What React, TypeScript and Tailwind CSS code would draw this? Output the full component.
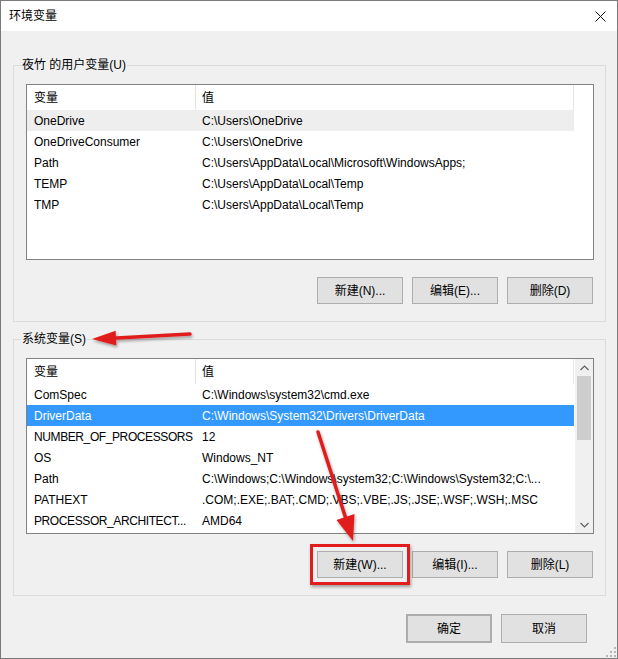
import React from "react";

type Row = { name: string; value: string; tight?: boolean };

const userVars: Row[] = [
  { name: "OneDrive", value: "C:\\Users\\OneDrive" },
  { name: "OneDriveConsumer", value: "C:\\Users\\OneDrive" },
  { name: "Path", value: "C:\\Users\\AppData\\Local\\Microsoft\\WindowsApps;" },
  { name: "TEMP", value: "C:\\Users\\AppData\\Local\\Temp" },
  { name: "TMP", value: "C:\\Users\\AppData\\Local\\Temp" },
];

const systemVars: Row[] = [
  { name: "ComSpec", value: "C:\\Windows\\system32\\cmd.exe" },
  { name: "DriverData", value: "C:\\Windows\\System32\\Drivers\\DriverData" },
  { name: "NUMBER_OF_PROCESSORS", value: "12", tight: true },
  { name: "OS", value: "Windows_NT" },
  { name: "Path", value: "C:\\Windows;C:\\Windows\\system32;C:\\Windows\\System32;C:\\..." },
  { name: "PATHEXT", value: ".COM;.EXE;.BAT;.CMD;.VBS;.VBE;.JS;.JSE;.WSF;.WSH;.MSC" },
  { name: "PROCESSOR_ARCHITECT...", value: "AMD64", tight: true },
];

const Btn = ({ label, className = "" }: { label: string; className?: string }) => (
  <button
    className={`w-[86px] h-[27px] bg-[#e1e1e1] border border-[#adadad] text-[12px] leading-none text-black ${className}`}
  >
    {label}
  </button>
);

const Scrollbar = () => (
  <div className="w-[18px] bg-[#f0f0f0] flex flex-col">
    <div className="h-[17px] flex items-center justify-center">
      <svg width="9" height="6" viewBox="0 0 9 6">
        <path d="M0.5 5 L4.5 1 L8.5 5" fill="none" stroke="#606060" strokeWidth="1.2" />
      </svg>
    </div>
    <div className="h-[64px] mx-[2px] bg-[#cdcdcd]" />
    <div className="flex-1" />
    <div className="h-[17px] flex items-center justify-center">
      <svg width="9" height="6" viewBox="0 0 9 6">
        <path d="M0.5 1 L4.5 5 L8.5 1" fill="none" stroke="#606060" strokeWidth="1.2" />
      </svg>
    </div>
  </div>
);

const VarList = ({
  rows,
  selected,
  focused,
  scroll,
}: {
  rows: Row[];
  selected: number;
  focused?: boolean;
  scroll?: boolean;
}) => (
  <div className="h-[176px] border border-[#828282] bg-white flex">
    <div className="w-[547px] flex flex-col">
      <div className="h-[25px] flex items-center">
        <div className="w-[169px] h-full pl-[7px] border-r border-[#e5e5e5] flex items-center">变量</div>
        <div className="w-[378px] h-full pl-[6px] border-r border-[#e5e5e5] flex items-center">值</div>
      </div>
      {rows.map((r, i) => {
        const sel = i === selected;
        const bg = sel ? (focused ? "bg-[#3399ff] text-white" : "bg-[#eeeeee]") : "";
        return (
          <div key={i} className={`h-[21px] flex items-center whitespace-nowrap ${bg}`}>
            <div className={`w-[169px] pl-[7px] overflow-hidden ${r.tight ? "tracking-[-0.4px]" : ""}`}>
              {r.name}
            </div>
            <div className="flex-1 pl-[6px] overflow-hidden">{r.value}</div>
          </div>
        );
      })}
    </div>
    <div className="flex-1" />
    {scroll && <Scrollbar />}
  </div>
);

const Group = ({
  title,
  children,
}: {
  title: string;
  children: React.ReactNode;
}) => (
  <fieldset className="border border-[#dcdcdc] p-0 m-0">
    <legend className="ml-[7px] px-[1px] leading-[17px]">{title}</legend>
    <div className="pl-[12px] pr-[11px] pt-[10px] pb-[17px]">{children}</div>
  </fieldset>
);

export default function App() {
  return (
    <div className="relative w-[618px] h-[659px] border border-[#7a7a7a] bg-[#f0f0f0] text-[12px] text-black font-['Liberation_Sans','Noto_Sans_CJK_SC',sans-serif] overflow-hidden flex flex-col">
      <div className="h-[30px] bg-white flex items-center justify-between pl-[8px] pr-[11px]">
        <span>环境变量</span>
        <svg width="11" height="11" viewBox="0 0 11 11">
          <path d="M0.5 0.5 L10.5 10.5 M10.5 0.5 L0.5 10.5" stroke="#111" strokeWidth="1" />
        </svg>
      </div>

      <div className="flex-1 flex flex-col pl-[12px] pr-[11px] pt-[26px]">
        <Group title="夜竹 的用户变量(U)">
          <VarList rows={userVars} selected={0} />
          <div className="mt-[17px] mr-[1px] flex justify-end gap-[9px]">
            <Btn label="新建(N)..." />
            <Btn label="编辑(E)..." />
            <Btn label="删除(D)" />
          </div>
        </Group>

        <div className="mt-[9px]">
          <Group title="系统变量(S)">
            <VarList rows={systemVars} selected={1} focused scroll />
            <div className="mt-[17px] mr-[1px] flex justify-end gap-[9px]">
              <div className="relative">
                <Btn label="新建(W)..." />
                <span className="absolute -inset-[7px] border-[3px] border-[#e11d1d] shadow-[1px_2px_3px_rgba(0,0,0,0.35)] pointer-events-none" />
              </div>
              <Btn label="编辑(I)..." />
              <Btn label="删除(L)" />
            </div>
          </Group>
        </div>

        <div className="mt-[18px] mr-[19px] flex justify-end gap-[9px]">
          <Btn label="确定" className="h-[29px] border-2 border-[#0078d7]" />
          <Btn label="取消" className="h-[29px]" />
        </div>

        <div className="flex-1 flex justify-end items-end -mr-[10px] pb-[1px]">
          <svg width="10" height="10" viewBox="0 0 10 10">
            <g fill="#b5b5b5">
              <rect x="8" y="0" width="2" height="2" />
              <rect x="4" y="4" width="2" height="2" />
              <rect x="8" y="4" width="2" height="2" />
              <rect x="0" y="8" width="2" height="2" />
              <rect x="4" y="8" width="2" height="2" />
              <rect x="8" y="8" width="2" height="2" />
            </g>
          </svg>
        </div>
      </div>

      <svg
        className="absolute left-[-1px] top-[-1px] pointer-events-none"
        width="618"
        height="659"
        viewBox="0 0 618 659"
      >
        <defs>
          <filter id="sh" x="-20%" y="-20%" width="140%" height="140%">
            <feDropShadow dx="1" dy="2" stdDeviation="1.5" floodColor="#000" floodOpacity="0.35" />
          </filter>
        </defs>
        <g filter="url(#sh)" fill="#e01f1c" stroke="#e01f1c">
          <line x1="190" y1="334" x2="112" y2="338.2" strokeWidth="3.5" strokeLinecap="round" />
          <polygon points="92,339 116.4,345.5 115.6,330.8" stroke="none" />
          <line x1="318" y1="432" x2="346" y2="519" strokeWidth="3.5" strokeLinecap="round" />
          <polygon points="353,541 354.5,514 336.5,520" stroke="none" />
        </g>
      </svg>
    </div>
  );
}
